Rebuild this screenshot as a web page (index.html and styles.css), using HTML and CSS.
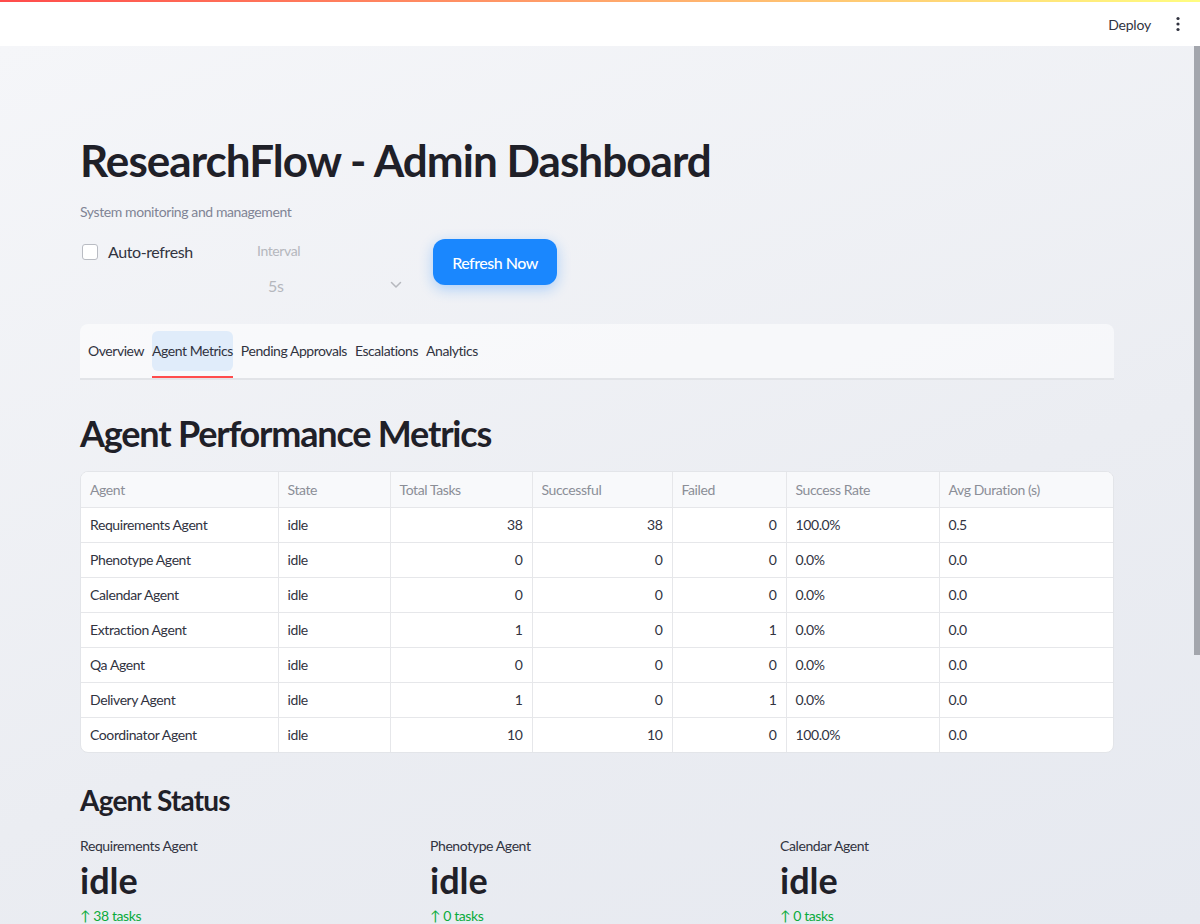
FILE: index.html
```html
<!DOCTYPE html>
<html lang="en">
<head>
<meta charset="utf-8">
<title>ResearchFlow - Admin Dashboard</title>
<link rel="stylesheet" href="styles.css">
</head>
<body>
<header class="topbar">
  <div class="topbar-line"></div>
  <div class="topbar-actions">
    <span class="deploy">Deploy</span>
    <span class="kebab" aria-label="menu">
      <svg width="4" height="16" viewBox="0 0 4 16"><circle cx="2" cy="2.5" r="1.6" fill="#31333f"/><circle cx="2" cy="8" r="1.6" fill="#31333f"/><circle cx="2" cy="13.5" r="1.6" fill="#31333f"/></svg>
    </span>
  </div>
</header>
<div class="scroll-thumb"></div>
<main class="main">
  <div class="block">
    <h1 class="title">ResearchFlow - Admin Dashboard</h1>
    <p class="caption">System monitoring and management</p>

    <div class="controls">
      <label class="check">
        <span class="box"></span>
        <span class="check-label">Auto-refresh</span>
      </label>
      <div class="select-wrap">
        <div class="select-label">Interval</div>
        <div class="select">
          <span>5s</span>
          <svg width="12" height="8" viewBox="0 0 12 8"><path d="M1.5 1.5 L6 6 L10.5 1.5" fill="none" stroke="#b6b8be" stroke-width="1.5" stroke-linecap="round" stroke-linejoin="round"/></svg>
        </div>
      </div>
      <button class="btn-primary">Refresh Now</button>
    </div>

    <nav class="tabs">
      <span class="tab">Overview</span>
      <span class="tab active">Agent Metrics</span>
      <span class="tab">Pending Approvals</span>
      <span class="tab">Escalations</span>
      <span class="tab">Analytics</span>
    </nav>

    <h2 class="h2">Agent Performance Metrics</h2>

    <div class="table-wrap">
      <table class="grid">
        <thead>
          <tr><th class="c1">Agent</th><th class="c2">State</th><th class="c3">Total Tasks</th><th class="c4">Successful</th><th class="c5">Failed</th><th class="c6">Success Rate</th><th class="c7">Avg Duration (s)</th></tr>
        </thead>
        <tbody>
          <tr><td>Requirements Agent</td><td>idle</td><td class="num">38</td><td class="num">38</td><td class="num">0</td><td>100.0%</td><td>0.5</td></tr>
          <tr><td>Phenotype Agent</td><td>idle</td><td class="num">0</td><td class="num">0</td><td class="num">0</td><td>0.0%</td><td>0.0</td></tr>
          <tr><td>Calendar Agent</td><td>idle</td><td class="num">0</td><td class="num">0</td><td class="num">0</td><td>0.0%</td><td>0.0</td></tr>
          <tr><td>Extraction Agent</td><td>idle</td><td class="num">1</td><td class="num">0</td><td class="num">1</td><td>0.0%</td><td>0.0</td></tr>
          <tr><td>Qa Agent</td><td>idle</td><td class="num">0</td><td class="num">0</td><td class="num">0</td><td>0.0%</td><td>0.0</td></tr>
          <tr><td>Delivery Agent</td><td>idle</td><td class="num">1</td><td class="num">0</td><td class="num">1</td><td>0.0%</td><td>0.0</td></tr>
          <tr><td>Coordinator Agent</td><td>idle</td><td class="num">10</td><td class="num">10</td><td class="num">0</td><td>100.0%</td><td>0.0</td></tr>
        </tbody>
      </table>
    </div>

    <h3 class="h3">Agent Status</h3>

    <div class="metrics">
      <div class="metric"><div class="m-label">Requirements Agent</div><div class="m-value">idle</div><div class="m-delta">↑ 38 tasks</div></div>
      <div class="metric"><div class="m-label">Phenotype Agent</div><div class="m-value">idle</div><div class="m-delta">↑ 0 tasks</div></div>
      <div class="metric"><div class="m-label">Calendar Agent</div><div class="m-value">idle</div><div class="m-delta">↑ 0 tasks</div></div>
      <div class="metric"><div class="m-label">Extraction Agent</div><div class="m-value">idle</div><div class="m-delta">↑ 1 tasks</div></div>
      <div class="metric"><div class="m-label">Qa Agent</div><div class="m-value">idle</div><div class="m-delta">↑ 0 tasks</div></div>
      <div class="metric"><div class="m-label">Delivery Agent</div><div class="m-value">idle</div><div class="m-delta">↑ 1 tasks</div></div>
      <div class="metric"><div class="m-label">Coordinator Agent</div><div class="m-value">idle</div><div class="m-delta">↑ 10 tasks</div></div>
    </div>
  </div>
</main>
</body>
</html>
```

FILE: styles.css
```css
* { box-sizing: border-box; }
html, body { margin: 0; padding: 0; height: 100%; overflow: hidden; }
body {
  font-family: "Lato", "Liberation Sans", sans-serif;
  color: #31333f;
  background: #f0f2f6;
  letter-spacing: -0.4px;
  position: relative;
}

.topbar {
  height: 46px;
  background: #ffffff;
  position: relative;
  display: flex;
  justify-content: flex-end;
  align-items: center;
}
.topbar-line {
  position: absolute;
  left: 0; right: 0; top: 0;
  height: 2px;
  background: linear-gradient(90deg, #ff4b4b 0%, #ffa56b 50%, #fffd80 100%);
}
.topbar-actions {
  display: flex;
  align-items: center;
  gap: 25px;
  padding-right: 20px;
  padding-top: 2px;
}
.deploy { font-size: 14px; color: #31333f; letter-spacing: -0.2px; }
.kebab { display: flex; align-items: center; }

.scroll-thumb {
  position: absolute;
  right: 0;
  top: 46px;
  width: 6px;
  height: 609px;
  background: #a3a6ad;
  z-index: 5;
}

.main {
  height: calc(100% - 46px);
  overflow-y: auto;
  background: linear-gradient(160deg, #f5f6f9 0%, #ebedf2 60%, #e6e9f0 100%);
}
.main::-webkit-scrollbar { display: none; }

.block {
  width: 1034px;
  margin: 0 0 0 80px;
  padding: 84px 0 110px;
}

.title {
  margin: 0;
  font-size: 44px;
  font-weight: 700;
  line-height: 60px;
  color: #1f2028;
  letter-spacing: -0.95px;
}
.caption {
  margin: 12px 0 0;
  font-size: 14px;
  color: #808495;
  line-height: 20px;
}

.controls {
  display: flex;
  align-items: flex-start;
  margin-top: 17px;
  height: 76px;
}
.check {
  display: flex;
  align-items: center;
  gap: 10px;
  width: 177px;
  padding-top: 3px;
  padding-left: 2px;
}
.box {
  width: 16px; height: 16px;
  border: 1px solid #b9bcc3;
  border-radius: 3px;
  background: #fff;
}
.check-label { font-size: 16px; color: #31333f; }

.select-wrap { width: 176px; }
.select-label {
  font-size: 14px;
  color: #b5b7bd;
  line-height: 20px;
  padding-top: 2px;
}
.select {
  margin-top: 4px;
  width: 153px;
  height: 40px;
  display: flex;
  align-items: center;
  justify-content: space-between;
  padding: 0 8px 0 11px;
  font-size: 16px;
  color: #b5b7bd;
}

.btn-primary {
  margin-top: 0;
  width: 124px;
  height: 46px;
  border: none;
  border-radius: 12px;
  background: #1a87fe;
  color: #fff;
  font-family: inherit;
  font-size: 16px;
  font-weight: 500;
  letter-spacing: -0.5px;
  box-shadow: 0 4px 14px rgba(26, 135, 254, 0.32);
}

.tabs {
  display: flex;
  gap: 8px;
  align-items: center;
  margin-top: 9px;
  height: 56px;
  padding: 0 8px;
  background: rgba(255, 255, 255, 0.55);
  border-radius: 8px 8px 0 0;
  border-bottom: 2px solid #e2e4e8;
}
.tab {
  font-size: 14px;
  line-height: 40px;
  height: 40px;
  color: #31333f;
  position: relative;
  white-space: nowrap;
  letter-spacing: -0.45px;
}
.tab.active {
  background: #e0ecfa;
  border-radius: 6px;
}
.tab.active::after {
  content: "";
  position: absolute;
  left: 0; right: 0;
  bottom: -7px;
  height: 2px;
  background: #ff4b4b;
}

.h2 {
  margin: 28px 0 0;
  font-size: 36px;
  font-weight: 700;
  line-height: 50px;
  color: #1f2028;
  letter-spacing: -1.2px;
}

.table-wrap {
  margin-top: 13px;
  border: 1px solid #e3e5e9;
  border-radius: 8px;
  overflow: hidden;
  background: #fff;
}
.grid {
  width: 100%;
  border-collapse: collapse;
  table-layout: fixed;
  font-size: 14px;
}
.grid th, .grid td {
  height: 35px;
  padding: 0 9px;
  text-align: left;
  border-right: 1px solid #e6e7ea;
  border-bottom: 1px solid #e6e7ea;
  white-space: nowrap;
}
.grid th:last-child, .grid td:last-child { border-right: none; }
.grid tbody tr:last-child td { border-bottom: none; }
.grid th {
  background: #f8f9fb;
  color: #8b8e97;
  font-weight: 400;
  height: 35px;
}
.grid td { color: #31333f; }
.grid td.num { text-align: right; }
.c1 { width: 197px; }
.c2 { width: 112px; }
.c3 { width: 142px; }
.c4 { width: 140px; }
.c5 { width: 114px; }
.c6 { width: 153px; }
.c7 { width: 176px; }

.h3 {
  margin: 27px 0 0;
  font-size: 28px;
  font-weight: 700;
  line-height: 40px;
  color: #1f2028;
  letter-spacing: -0.8px;
}

.metrics {
  margin-top: 16px;
  display: grid;
  grid-template-columns: repeat(3, 350px);
  row-gap: 24px;
}
.m-label { font-size: 14px; color: #31333f; line-height: 20px; }
.m-value {
  font-size: 36px;
  font-weight: 700;
  line-height: 48px;
  color: #1f2028;
  margin-top: 0;
  letter-spacing: 0;
}
.m-delta {
  font-size: 14px;
  color: #09ab3b;
  line-height: 20px;
  margin-top: 2px;
}
```
